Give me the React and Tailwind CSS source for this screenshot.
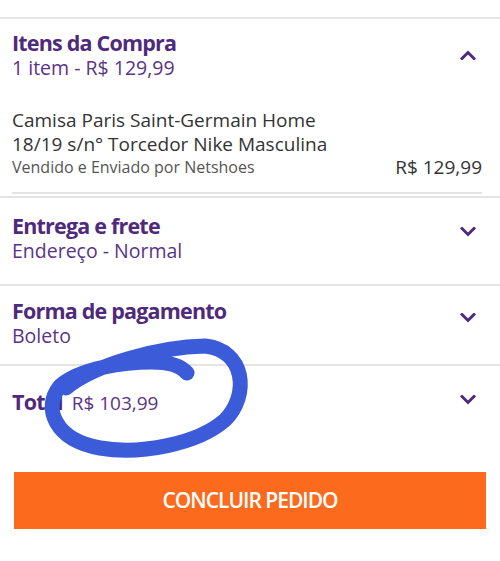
import React from 'react';

const font = { fontFamily: '"Open Sans", "DejaVu Sans", sans-serif' };

function Chevron({ up }) {
  return (
    <svg width="16" height="10" viewBox="0 0 16 10" className="shrink-0">
      <path
        d={up ? 'M2 8.5 L8 2.5 L14 8.5' : 'M2 1.5 L8 7.5 L14 1.5'}
        fill="none"
        stroke="#4f2a7c"
        strokeWidth="3"
        strokeLinecap="square"
      />
    </svg>
  );
}

function Header({ title, sub, up, chevronTop }) {
  return (
    <div className="flex items-start justify-between pl-3 pr-6">
      <div>
        <h2 className="text-[21.5px] leading-[27px] font-bold tracking-[-0.8px] text-[#4f2a7c]">{title}</h2>
        {sub && <p className="text-[19.5px] leading-[23px] text-[#5a3487]">{sub}</p>}
      </div>
      <div className={chevronTop}>
        <Chevron up={up} />
      </div>
    </div>
  );
}

export default function App() {
  return (
    <div className="relative w-[500px] h-[561px] bg-white overflow-hidden" style={font}>
      <div className="h-[19px] border-b-2 border-[#e4e4e4]" />

      {/* Itens da compra */}
      <div className="pt-[10px] border-b-2 border-[#e4e4e4]">
        <Header title="Itens da Compra" sub="1 item - R$ 129,99" up chevronTop="pt-[21px]" />
        <div className="ml-3 mr-[18px] mt-[29px] pb-[14px] border-b-2 border-[#e4e4e4] text-[#333]">
          <p className="text-[19px] leading-[24px]">Camisa Paris Saint-Germain Home</p>
          <p className="text-[19px] leading-[24px]">18/19 s/n° Torcedor Nike Masculina</p>
          <div className="flex items-end justify-between">
            <p className="text-[16px] leading-[22px] text-[#555]">Vendido e Enviado por Netshoes</p>
            <p className="text-[19px] leading-[22px]">R$ 129,99</p>
          </div>
        </div>
        <div className="h-[2px]" />
      </div>

      <div className="h-[88px] pt-[14px] border-b-2 border-[#e4e4e4]">
        <Header title="Entrega e frete" sub="Endereço - Normal" chevronTop="pt-[15px]" />
      </div>

      <div className="h-[80px] pt-[11px] border-b-2 border-[#e4e4e4]">
        <Header title="Forma de pagamento" sub="Boleto" chevronTop="pt-[16px]" />
      </div>

      <div className="h-[106px] pt-[22px]">
        <div className="flex items-start justify-between pl-3 pr-6">
          <div className="flex items-baseline gap-[9px]">
            <h2 className="text-[21.5px] leading-[27px] font-bold tracking-[-0.8px] text-[#4f2a7c]">Total</h2>
            <p className="text-[19px] leading-[24px] text-[#5a3487]">R$ 103,99</p>
          </div>
          <div className="pt-[7px]">
            <Chevron />
          </div>
        </div>
      </div>

      <div className="px-[14px]">
        <button className="w-full h-[57px] bg-[#fc6a1e] text-white text-[21px] font-semibold tracking-[-1px]">
          CONCLUIR PEDIDO
        </button>
      </div>

      {/* caneta azul por cima */}
      <svg className="absolute left-0 top-0 pointer-events-none" width="500" height="561" viewBox="0 0 500 561">
        <path
          d="M66 388 C 95 364, 160 347, 205 346 C 245 350, 250 395, 225 420 C 198 444, 140 455, 100 448 C 55 440, 42 408, 60 386 C 80 368, 125 362, 152 362 C 170 362, 181 366, 187 373"
          fill="none"
          stroke="#3c5bd8"
          strokeWidth="15"
          strokeLinecap="round"
          strokeLinejoin="round"
        />
      </svg>
    </div>
  );
}
